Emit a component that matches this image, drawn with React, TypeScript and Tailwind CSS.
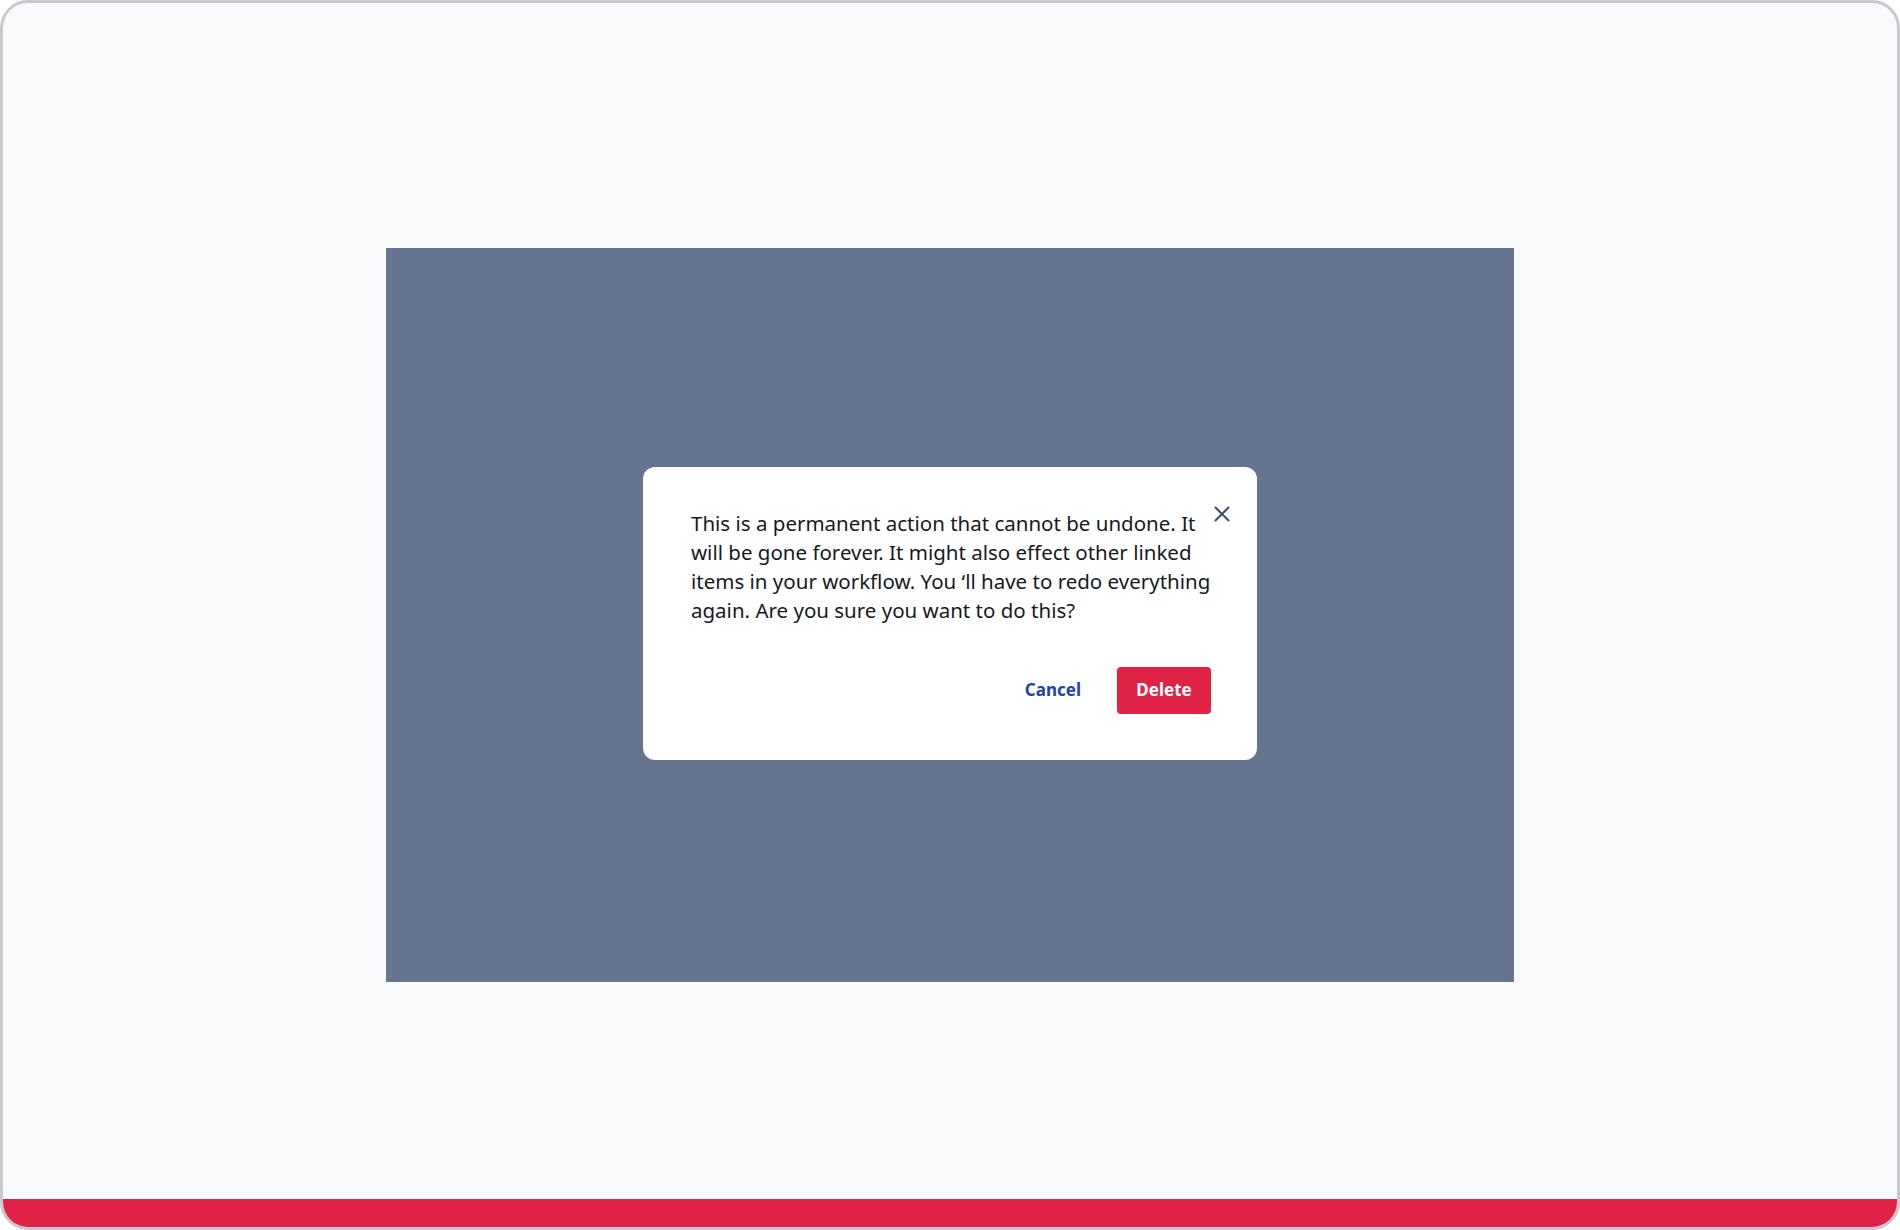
export default function App() {
  return (
    <div
      className="h-[1230px] w-full overflow-hidden rounded-[28px] border-[3px] border-[#c8c9ce] bg-[#f9fafc] flex flex-col"
      style={{ fontFamily: '"Noto Sans", "Open Sans", sans-serif' }}
    >
      <main className="flex-1 flex justify-center pt-[245px]">
        <div className="w-[1128px] h-[734px] bg-[#65748f] flex items-center justify-center pb-[4px]">
          <div className="relative w-[614px] rounded-[12px] bg-white pl-12 pr-[32px] pt-[42px] pb-[46px]">
            <button className="absolute right-[25px] top-[37px] p-[2px] text-[#3f4c66]" aria-label="Close">
              <svg width="16" height="16" viewBox="0 0 16 16" fill="none" stroke="currentColor" strokeWidth="2" strokeLinecap="round">
                <path d="M1.5 1.5L14.5 14.5M14.5 1.5L1.5 14.5" />
              </svg>
            </button>
            <p className="text-[20.5px] leading-[29px] text-[#16191f]">
              This is a permanent action that cannot be undone. It will be gone forever. It might also effect other linked items in your workflow. You ‘ll have to redo everything again. Are you sure you want to do this?
            </p>
            <div className="mt-[42px] pr-[14px] flex items-center justify-end gap-[36px]">
              <button className="text-[17px] font-bold text-[#2343a6]">Cancel</button>
              <button className="h-[47px] w-[94px] rounded-[4px] bg-[#e12247] text-[17px] font-bold text-white">
                Delete
              </button>
            </div>
          </div>
        </div>
      </main>
      <div className="h-[28px] bg-[#e12247]" />
    </div>
  );
}
